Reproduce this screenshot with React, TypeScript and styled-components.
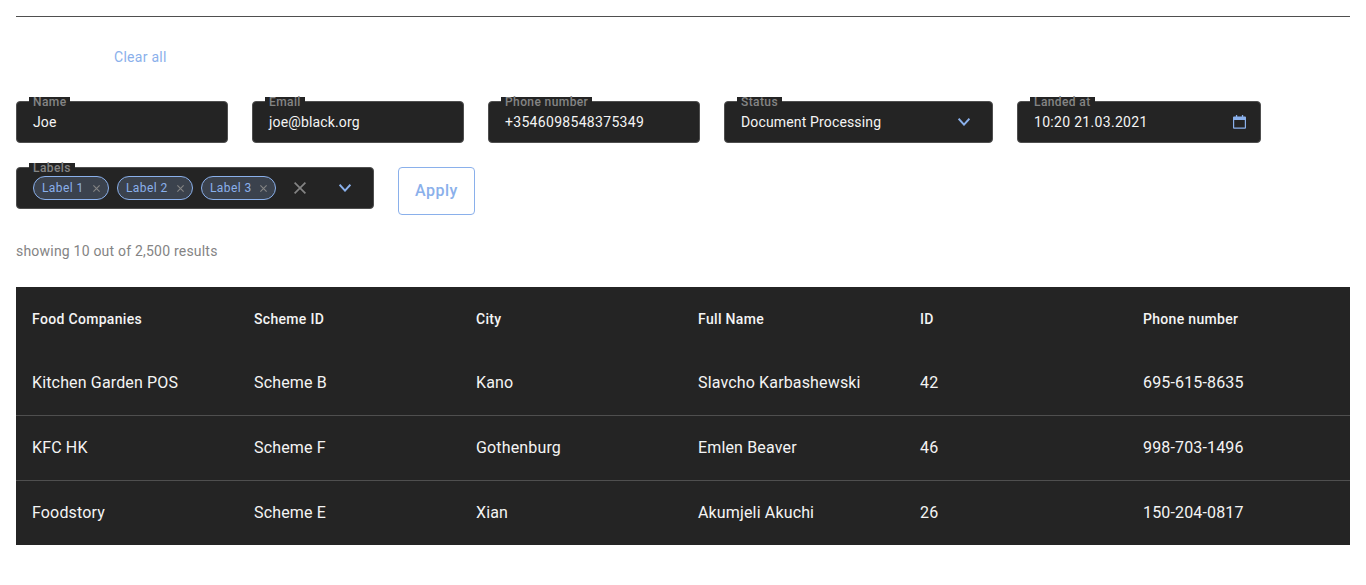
import React from 'react';
import styled, { createGlobalStyle } from 'styled-components';

const surface = '#242424';
const line = '#4f4f4f';
const primary = '#8ab0eb';
const muted = '#848484';
const text = '#f4f4f4';

const GlobalStyle = createGlobalStyle`
  *, *::before, *::after { box-sizing: border-box; }
  body {
    margin: 0;
    background: #fff;
    font-family: Roboto, "Liberation Sans", sans-serif;
  }
`;

const Page = styled.main`
  padding: 16px 16px 0;
`;

const Header = styled.header`
  display: flex;
  align-items: center;
  height: 81px;
  border-top: 1px solid ${line};
  padding-left: 98px;
`;

const ClearButton = styled.button`
  border: 0;
  padding: 0;
  background: none;
  color: ${primary};
  font: 400 14px/20px Roboto, sans-serif;
  letter-spacing: 0.28px;
`;

const Filters = styled.form`
  display: flex;
  flex-wrap: wrap;
  align-items: flex-start;
  gap: 24px;
  padding-top: 4px;
`;

const Field = styled.div<{ $width: number }>`
  position: relative;
  display: flex;
  align-items: center;
  width: ${(p) => p.$width}px;
  height: 42px;
  padding: 0 16px;
  border: 1px solid ${line};
  border-radius: 4px;
  background: ${surface};
`;

const FieldLabel = styled.label`
  position: absolute;
  top: -5px;
  left: 12px;
  padding: 0 4px;
  background: ${surface};
  color: ${muted};
  font-size: 12px;
  font-weight: 500;
  line-height: 10px;
  letter-spacing: 0.4px;
  white-space: nowrap;
`;

const FieldValue = styled.span<{ $numeric?: boolean }>`
  flex: 1;
  color: ${text};
  font-size: 14px;
  line-height: 20px;
  letter-spacing: ${(p) => (p.$numeric ? 0.31 : 0.15)}px;
`;

const IconSlot = styled.span<{ $end?: number; $start?: number }>`
  display: flex;
  margin-left: ${(p) => p.$start ?? 0}px;
  margin-right: ${(p) => p.$end ?? 0}px;
`;

const Chips = styled.div`
  display: flex;
  gap: 8px;
`;

const Chip = styled.span<{ $width: number }>`
  display: flex;
  align-items: center;
  justify-content: space-between;
  width: ${(p) => p.$width}px;
  height: 24px;
  padding: 0 8px;
  border: 1px solid ${primary};
  border-radius: 12px;
  background: #3b424d;
  color: ${primary};
  font-size: 12px;
  letter-spacing: 0.4px;
  white-space: nowrap;
`;

const ApplyButton = styled.button`
  width: 77px;
  height: 48px;
  padding: 0;
  border: 1px solid ${primary};
  border-radius: 4px;
  background: transparent;
  color: ${primary};
  font: 500 16px/24px Roboto, sans-serif;
  letter-spacing: 0.5px;
`;

const Summary = styled.p`
  margin: 26px 0;
  color: ${muted};
  font-size: 14px;
  line-height: 20px;
  letter-spacing: 0.21px;
`;

const Table = styled.div`
  background: ${surface};
  color: ${text};
`;

const Row = styled.div<{ $divided?: boolean }>`
  display: grid;
  grid-template-columns: 222px 222px 222px 222px 223px 1fr;
  align-items: center;
  height: ${(p) => (p.$divided ? 65 : 64)}px;
  border-bottom: ${(p) => (p.$divided ? `1px solid ${line}` : '0')};
`;

const HeadCell = styled.div`
  padding: 0 16px;
  font-size: 14px;
  font-weight: 500;
  line-height: 20px;
  letter-spacing: 0.32px;
`;

const Cell = styled.div`
  padding: 0 16px;
  font-size: 16px;
  line-height: 24px;
  letter-spacing: 0.15px;
`;

const Chevron = () => (
  <svg width="12" height="8" viewBox="0 0 12 8" fill="none" stroke={primary} strokeWidth="2">
    <path d="M0.6 0.8L6 6.6L11.4 0.8" />
  </svg>
);

const Cross = ({ size, width }: { size: number; width: number }) => (
  <svg width={size} height={size} viewBox="0 0 12 12" fill="none" stroke={muted} strokeWidth={width}>
    <path d="M0.6 0.6L11.4 11.4M11.4 0.6L0.6 11.4" />
  </svg>
);

const Calendar = () => (
  <svg width="13" height="14" viewBox="0 0 13 14" fill={primary}>
    <path
      fillRule="evenodd"
      d="M1 1.6H2.9V0H4.2V1.6H8.9V0H10.2V1.6H12Q13 1.6 13 2.6V12.8Q13 13.8 12 13.8H1Q0 13.8 0 12.8V2.6Q0 1.6 1 1.6ZM1.2 5V12.6H11.8V5Z"
    />
  </svg>
);

const columns = ['Food Companies', 'Scheme ID', 'City', 'Full Name', 'ID', 'Phone number'];
const rows = [
  ['Kitchen Garden POS', 'Scheme B', 'Kano', 'Slavcho Karbashewski', '42', '695-615-8635'],
  ['KFC HK', 'Scheme F', 'Gothenburg', 'Emlen Beaver', '46', '998-703-1496'],
  ['Foodstory', 'Scheme E', 'Xian', 'Akumjeli Akuchi', '26', '150-204-0817'],
];
const chips = [
  { name: 'Label 1', width: 76 },
  { name: 'Label 2', width: 76 },
  { name: 'Label 3', width: 75 },
];

export default function App() {
  return (
    <>
      <GlobalStyle />
      <Page>
        <Header>
          <ClearButton type="button">Clear all</ClearButton>
        </Header>
        <Filters>
          <Field $width={212}>
            <FieldLabel>Name</FieldLabel>
            <FieldValue>Joe</FieldValue>
          </Field>
          <Field $width={212}>
            <FieldLabel>Email</FieldLabel>
            <FieldValue>joe@black.org</FieldValue>
          </Field>
          <Field $width={212}>
            <FieldLabel>Phone number</FieldLabel>
            <FieldValue $numeric>+3546098548375349</FieldValue>
          </Field>
          <Field $width={269}>
            <FieldLabel>Status</FieldLabel>
            <FieldValue>Document Processing</FieldValue>
            <IconSlot $end={6}><Chevron /></IconSlot>
          </Field>
          <Field $width={244}>
            <FieldLabel>Landed at</FieldLabel>
            <FieldValue $numeric>10:20 21.03.2021</FieldValue>
            <IconSlot $end={-2}><Calendar /></IconSlot>
          </Field>
          <Field $width={358}>
            <FieldLabel>Labels</FieldLabel>
            <Chips>
              {chips.map((chip) => (
                <Chip key={chip.name} $width={chip.width}>
                  {chip.name}
                  <IconSlot $end={0.5}><Cross size={7} width={1.9} /></IconSlot>
                </Chip>
              ))}
            </Chips>
            <IconSlot $start={18}><Cross size={12} width={1.7} /></IconSlot>
            <IconSlot $start={33}><Chevron /></IconSlot>
          </Field>
          <ApplyButton type="button">Apply</ApplyButton>
        </Filters>
        <Summary>showing 10 out of 2,500 results</Summary>
        <Table role="table">
          <Row role="row">
            {columns.map((column) => <HeadCell role="columnheader" key={column}>{column}</HeadCell>)}
          </Row>
          {rows.map((row, index) => (
            <Row role="row" key={row[0]} $divided={index < rows.length - 1}>
              {row.map((value) => (
                <Cell role="cell" key={value}>{value}</Cell>
              ))}
            </Row>
          ))}
        </Table>
      </Page>
    </>
  );
}
